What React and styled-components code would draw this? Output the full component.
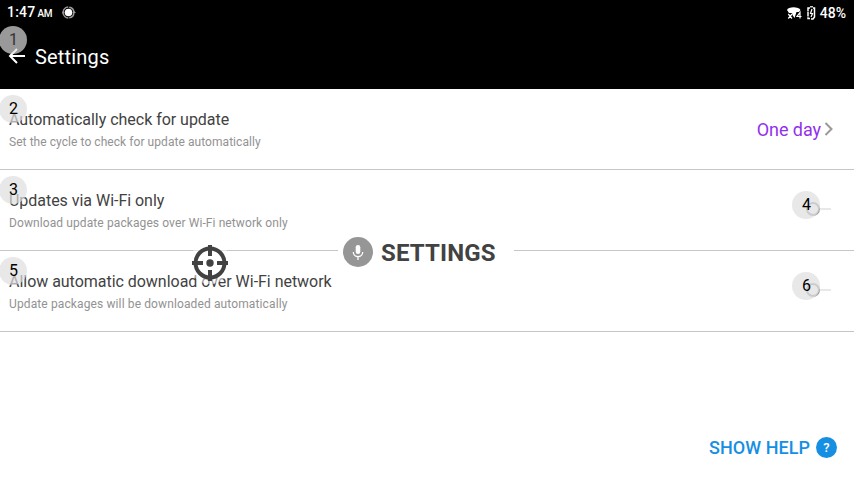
import React from 'react';
import styled, { createGlobalStyle } from 'styled-components';

const GlobalStyle = createGlobalStyle`
  * { box-sizing: border-box; }
  body { margin: 0; background: #fff; font-family: Roboto, "Noto Sans", sans-serif; }
`;

const Screen = styled.main`
  position: relative;
  display: flex;
  flex-direction: column;
  width: 854px;
  height: 480px;
  overflow: hidden;
  background: #fff;
`;

const Header = styled.header`
  flex: none;
  height: 89px;
  background: #000;
  color: #fff;
`;

const StatusBar = styled.div`
  display: flex;
  align-items: center;
  justify-content: space-between;
  height: 25px;
  padding: 0 8px 0 7px;
`;

const StatusGroup = styled.div`
  display: flex;
  align-items: center;
  gap: ${(p) => p.$gap}px;
`;

const Clock = styled.span`
  width: 46px;
  font-size: 14px;
  line-height: 24px;
  font-weight: 500;
  letter-spacing: 0.2px;
  white-space: nowrap;
`;

const Meridiem = styled.small`
  margin-left: 2px;
  font-size: 10px;
  letter-spacing: -0.3px;
`;

const Battery = styled.span`
  font-size: 14px;
  line-height: 24px;
  font-weight: 500;
`;

const TitleBar = styled.div`
  display: flex;
  align-items: center;
  gap: 9px;
  height: 64px;
  padding-left: 8px;
`;

const Title = styled.h1`
  margin: 0;
  font-size: 20px;
  line-height: 24px;
  font-weight: 400;
  letter-spacing: 0.18px;
`;

const List = styled.section`
  flex: none;
`;

const Row = styled.div`
  display: flex;
  align-items: center;
  justify-content: space-between;
  height: 81px;
  padding: 2px 20px 0 9px;
  border-bottom: 1px solid #c6c6c6;
`;

const Label = styled.div`
  padding-top: 1px;
  font-size: 16px;
  line-height: 22px;
  letter-spacing: -0.03px;
  color: #424242;
`;

const Hint = styled.div`
  margin-top: 1px;
  font-size: 12px;
  line-height: 20px;
  letter-spacing: ${(p) => p.$track}px;
  color: #929292;
`;

const Choice = styled.div`
  display: flex;
  align-items: center;
  gap: 3px;
  font-size: 18px;
  line-height: 22px;
  letter-spacing: -0.05px;
  color: #9130ee;
`;

const Chevron = styled.svg`
  margin-top: -2px;
`;

const Switch = styled.div`
  display: flex;
  align-items: center;
  width: 26px;
  height: 14px;
  margin: -5px 3px 0 0;
`;

const Thumb = styled.i`
  width: 14px;
  height: 14px;
  margin-left: 1px;
  border: 2px solid #a2a2a2;
  border-radius: 50%;
`;

const Track = styled.i`
  flex: 1;
  height: 2px;
  background: #e8e8e8;
`;

const Badge = styled.div`
  position: absolute;
  left: ${(p) => p.$x - 14}px;
  top: ${(p) => p.$y - 14}px;
  width: 28px;
  height: 28px;
  border-radius: 50%;
  background: rgba(222, 222, 222, 0.69);
  color: ${(p) => (p.$dim ? '#333' : '#000')};
  font-size: 16px;
  line-height: 28px;
  text-align: center;
  text-indent: 1px;
`;

const Crosshair = styled.svg`
  position: absolute;
  left: 188px;
  top: 241px;
`;

const VoicePrompt = styled.div`
  position: absolute;
  left: 338px;
  top: 232px;
  display: flex;
  align-items: center;
  gap: 8px;
  width: 176px;
  height: 40px;
  padding-left: 5px;
  background: #fff;
  color: #424242;
  font-size: 24px;
  font-weight: 700;
  letter-spacing: 0.15px;
  white-space: nowrap;
`;

const PromptText = styled.span`
  line-height: 40px;
  padding-top: 2px;
`;

const Help = styled.div`
  display: flex;
  align-items: center;
  align-self: flex-end;
  gap: 6px;
  height: 24px;
  margin: auto 17px 20px 0;
  color: #168fe3;
  font-size: 18px;
  font-weight: 500;
`;

const HelpText = styled.span`
  margin-top: -2px;
  letter-spacing: 0.05px;
`;

const HelpMark = styled.span`
  width: 21px;
  height: 21px;
  margin-top: -1px;
  border-radius: 50%;
  background: #168fe3;
  color: #fff;
  font-size: 13px;
  line-height: 21px;
  text-align: center;
`;

const settings = [
  { label: 'Automatically check for update', hint: 'Set the cycle to check for update automatically', track: 0.06, value: 'One day' },
  { label: 'Updates via Wi-Fi only', hint: 'Download update packages over Wi-Fi network only', track: 0.1 },
  { label: 'Allow automatic download over Wi-Fi network', hint: 'Update packages will be downloaded automatically', track: 0.12 },
];

const badges = [[13, 40], [13, 109], [13, 190], [806, 205], [13, 271], [806, 286]];

const SyncIcon = () => (
  <svg width="15" height="14" viewBox="0 0 15 14" fill="none">
    <circle cx="6.500" cy="6.500" r="5.400" stroke="#999" strokeWidth="1.500" strokeDasharray="7.500 1" />
    <path d="M-.5 6h3L1 8zM10.500 7h3.500l-1.700-2z" fill="#999" />
    <circle cx="6.500" cy="6.500" r="3.800" fill="#fff" />
  </svg>
);

const NetworkIcon = () => (
  <svg width="16" height="14" viewBox="0 0 16 14">
    <path d="M0 4C1 .2 12 .2 13.500 4L12 6H9.500L7.500 12 5.500 9 5 7H2z" fill="#fff" />
    <path d="M1.300 8l3.700 4.500M5 8l-3.700 4.500M13 12.500V6.500L10 10.500h4.500" fill="none" stroke="#fff" strokeWidth="1.200" />
  </svg>
);

const BatteryIcon = () => (
  <svg width="9" height="14" viewBox="0 0 9 14" fill="none" stroke="#fff">
    <path d="M3 .8h3" strokeWidth="1.200" />
    <path d="M3 2H1v10.500h2" strokeWidth="1.500" strokeDasharray="5 .6" />
    <path d="M6 2h1.500v9L6 13H4" strokeWidth="1.500" />
    <path d="M5 3L3.500 7.500h2L4 11" strokeWidth="1.200" />
  </svg>
);

export default function App() {
  return (
    <>
      <GlobalStyle />
      <Screen>
        <Header>
          <StatusBar>
            <StatusGroup $gap={9}>
              <Clock>1:47<Meridiem>AM</Meridiem></Clock>
              <SyncIcon />
            </StatusGroup>
            <StatusGroup $gap={4}>
              <NetworkIcon />
              <BatteryIcon />
              <Battery>48%</Battery>
            </StatusGroup>
          </StatusBar>
          <TitleBar>
            <svg width="18" height="18" viewBox="0 0 18 18" fill="none" stroke="#fff" strokeWidth="2">
              <path d="M17 8H3M9 1L2 8l7 7" />
            </svg>
            <Title>Settings</Title>
          </TitleBar>
        </Header>
        <List>
          {settings.map((s) => (
            <Row key={s.label}>
              <div>
                <Label>{s.label}</Label>
                <Hint $track={s.track}>{s.hint}</Hint>
              </div>
              {s.value ? (
                <Choice>
                  {s.value}
                  <Chevron width="10" height="14" viewBox="0 0 10 14" fill="none" stroke="#999" strokeWidth="2">
                    <path d="M1.500 1l6 6-6 6" />
                  </Chevron>
                </Choice>
              ) : (
                <Switch><Thumb /><Track /></Switch>
              )}
            </Row>
          ))}
        </List>
        <Help><HelpText>SHOW HELP</HelpText><HelpMark>?</HelpMark></Help>
        {badges.map(([x, y], i) => (
          <Badge key={i} $x={x} $y={y} $dim={i === 0}>{i + 1}</Badge>
        ))}
        <Crosshair width="44" height="44" viewBox="0 0 44 44" fill="none">
          <circle cx="22" cy="22" r="21" fill="#fff" fillOpacity=".5" />
          <circle cx="22" cy="22" r="14.500" stroke="#424242" strokeWidth="4" />
          <circle cx="22" cy="22" r="3.700" fill="#424242" />
          <path d="M22 4v11M22 29v11M4 22h11M29 22h11" stroke="#424242" strokeWidth="4" />
        </Crosshair>
        <VoicePrompt>
          <svg width="30" height="30" viewBox="0 0 30 30" fill="none">
            <circle cx="15" cy="15" r="15" fill="#969696" />
            <rect x="12.700" y="8" width="4.600" height="9" rx="2.300" fill="#fff" />
            <path d="M10.300 15a4.700 4.700 0 0 0 9.400 0M15 19.700V23" stroke="#fff" strokeWidth="1.300" />
          </svg>
          <PromptText>SETTINGS</PromptText>
        </VoicePrompt>
      </Screen>
    </>
  );
}
